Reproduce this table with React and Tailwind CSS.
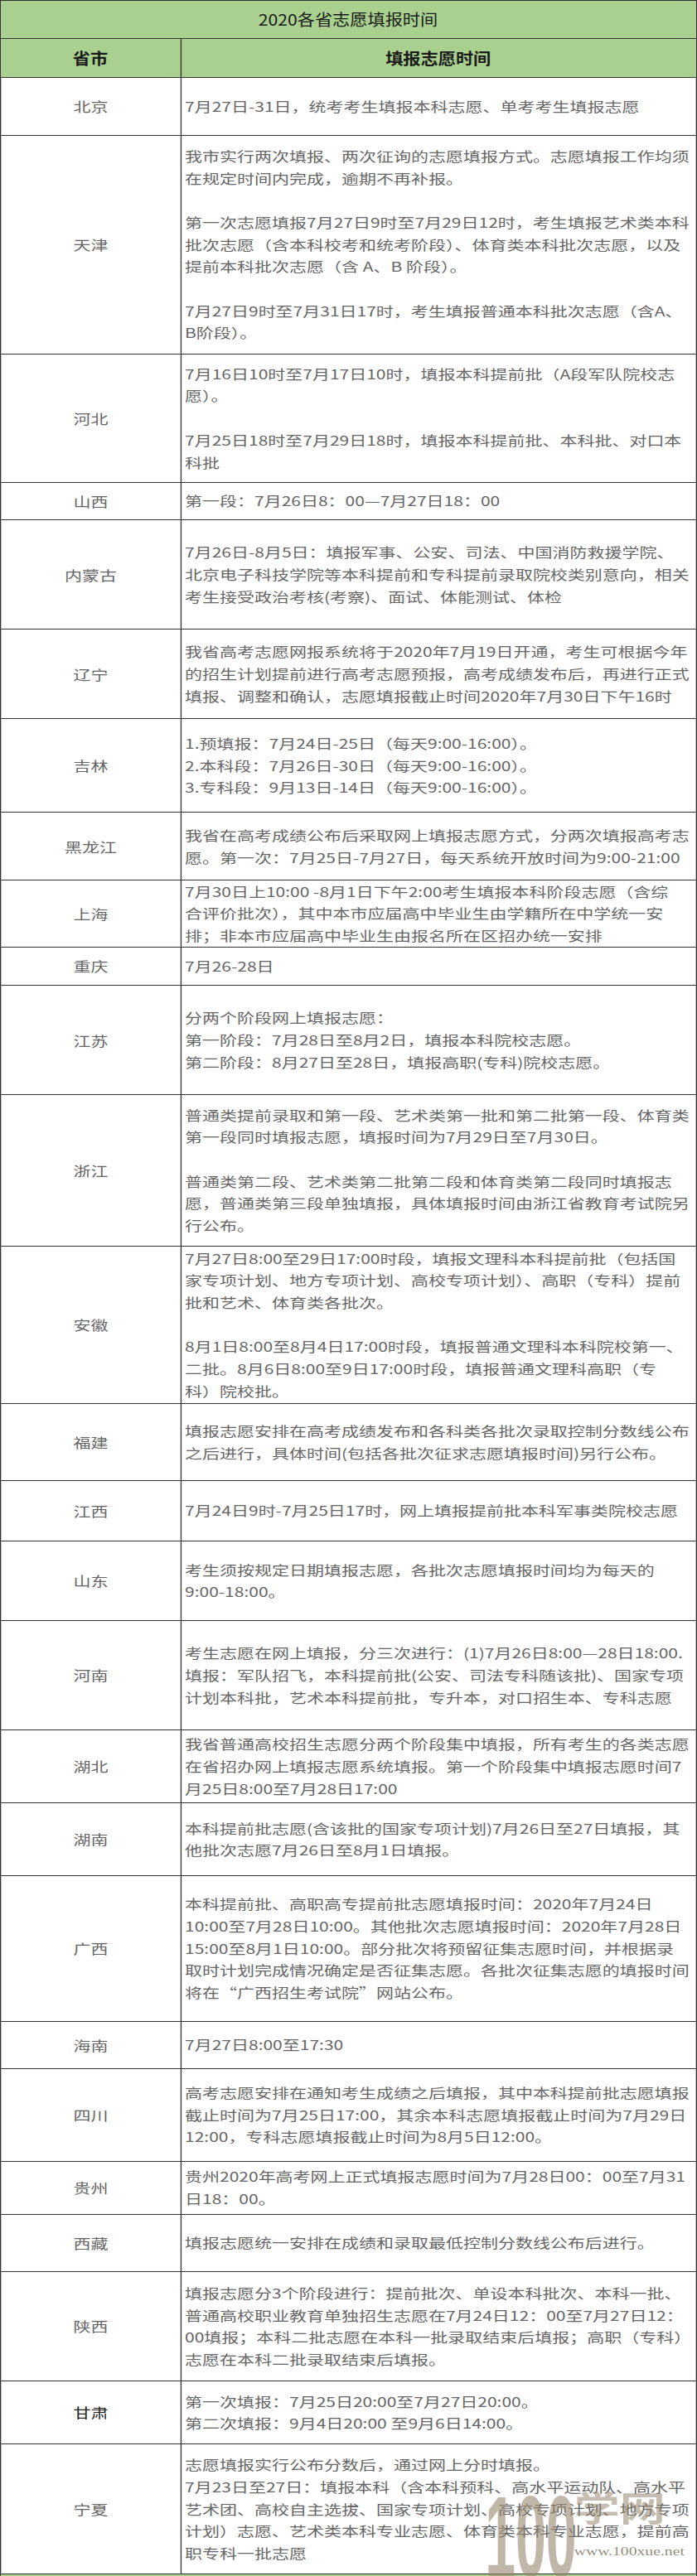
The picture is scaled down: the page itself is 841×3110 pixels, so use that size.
import React from 'react';

const rows = [
  { name: '北京', h: 'h-[70px]', p: [['7月27日-31日，统考考生填报本科志愿、单考考生填报志愿']] },
  {
    name: '天津',
    h: 'h-[264px]',
    p: [
      ['我市实行两次填报、两次征询的志愿填报方式。志愿填报工作均须', '在规定时间内完成，逾期不再补报。'],
      ['第一次志愿填报7月27日9时至7月29日12时，考生填报艺术类本科', '批次志愿（含本科校考和统考阶段）、体育类本科批次志愿，以及', '提前本科批次志愿（含 A、B 阶段）。'],
      ['7月27日9时至7月31日17时，考生填报普通本科批次志愿（含A、', 'B阶段）。'],
    ],
  },
  {
    name: '河北',
    h: 'h-[155px]',
    p: [
      ['7月16日10时至7月17日10时，填报本科提前批（A段军队院校志', '愿）。'],
      ['7月25日18时至7月29日18时，填报本科提前批、本科批、对口本', '科批'],
    ],
  },
  { name: '山西', h: 'h-[45.5px]', p: [['第一段：7月26日8：00—7月27日18：00']] },
  {
    name: '内蒙古',
    h: 'h-[132px]',
    p: [['7月26日-8月5日：填报军事、公安、司法、中国消防救援学院、', '北京电子科技学院等本科提前和专科提前录取院校类别意向，相关', '考生接受政治考核(考察)、面试、体能测试、体检']],
  },
  {
    name: '辽宁',
    h: 'h-[108px]',
    p: [['我省高考志愿网报系统将于2020年7月19日开通，考生可根据今年', '的招生计划提前进行高考志愿预报，高考成绩发布后，再进行正式', '填报、调整和确认，志愿填报截止时间2020年7月30日下午16时']],
  },
  {
    name: '吉林',
    h: 'h-[113px]',
    p: [['1.预填报：7月24日-25日（每天9:00-16:00）。', '2.本科段：7月26日-30日（每天9:00-16:00）。', '3.专科段：9月13日-14日（每天9:00-16:00）。']],
  },
  {
    name: '黑龙江',
    h: 'h-[82px]',
    p: [['我省在高考成绩公布后采取网上填报志愿方式，分两次填报高考志', '愿。第一次：7月25日-7月27日，每天系统开放时间为9:00-21:00']],
  },
  {
    name: '上海',
    h: 'h-[80.5px]',
    p: [['7月30日上10:00 -8月1日下午2:00考生填报本科阶段志愿（含综', '合评价批次），其中本市应届高中毕业生由学籍所在中学统一安', '排；非本市应届高中毕业生由报名所在区招办统一安排']],
  },
  { name: '重庆', h: 'h-[46.5px]', p: [['7月26-28日']] },
  {
    name: '江苏',
    h: 'h-[132px]',
    p: [['分两个阶段网上填报志愿：', '第一阶段：7月28日至8月2日，填报本科院校志愿。', '第二阶段：8月27日至28日，填报高职(专科)院校志愿。']],
  },
  {
    name: '浙江',
    h: 'h-[182.5px]',
    p: [
      ['普通类提前录取和第一段、艺术类第一批和第二批第一段、体育类', '第一段同时填报志愿，填报时间为7月29日至7月30日。'],
      ['普通类第二段、艺术类第二批第二段和体育类第二段同时填报志', '愿，普通类第三段单独填报，具体填报时间由浙江省教育考试院另', '行公布。'],
    ],
  },
  {
    name: '安徽',
    h: 'h-[190px]',
    p: [
      ['7月27日8:00至29日17:00时段，填报文理科本科提前批（包括国', '家专项计划、地方专项计划、高校专项计划）、高职（专科）提前', '批和艺术、体育类各批次。'],
      ['8月1日8:00至8月4日17:00时段，填报普通文理科本科院校第一、', '二批。8月6日8:00至9日17:00时段，填报普通文理科高职（专', '科）院校批。'],
    ],
  },
  {
    name: '福建',
    h: 'h-[93.5px]',
    p: [['填报志愿安排在高考成绩发布和各科类各批次录取控制分数线公布', '之后进行，具体时间(包括各批次征求志愿填报时间)另行公布。']],
  },
  { name: '江西', h: 'h-[72.5px]', p: [['7月24日9时-7月25日17时，网上填报提前批本科军事类院校志愿']] },
  {
    name: '山东',
    h: 'h-[96.5px]',
    p: [['考生须按规定日期填报志愿，各批次志愿填报时间均为每天的', '9:00-18:00。']],
  },
  {
    name: '河南',
    h: 'h-[131.5px]',
    p: [['考生志愿在网上填报，分三次进行：(1)7月26日8:00—28日18:00.', '填报：军队招飞，本科提前批(公安、司法专科随该批)、国家专项', '计划本科批，艺术本科提前批，专升本，对口招生本、专科志愿']],
  },
  {
    name: '湖北',
    h: 'h-[88.5px]',
    p: [['我省普通高校招生志愿分两个阶段集中填报，所有考生的各类志愿', '在省招办网上填报志愿系统填报。第一个阶段集中填报志愿时间7', '月25日8:00至7月28日17:00']],
  },
  {
    name: '湖南',
    h: 'h-[87.5px]',
    p: [['本科提前批志愿(含该批的国家专项计划)7月26日至27日填报，其', '他批次志愿7月26日至8月1日填报。']],
  },
  {
    name: '广西',
    h: 'h-[176px]',
    p: [[
      '本科提前批、高职高专提前批志愿填报时间：2020年7月24日',
      '10:00至7月28日10:00。其他批次志愿填报时间：2020年7月28日',
      '15:00至8月1日10:00。部分批次将预留征集志愿时间，并根据录',
      '取时计划完成情况确定是否征集志愿。各批次征集志愿的填报时间',
      '将在“广西招生考试院”网站公布。',
    ]],
  },
  { name: '海南', h: 'h-[57px]', p: [['7月27日8:00至17:30']] },
  {
    name: '四川',
    h: 'h-[112px]',
    p: [['高考志愿安排在通知考生成绩之后填报，其中本科提前批志愿填报', '截止时间为7月25日17:00，其余本科志愿填报截止时间为7月29日', '12:00，专科志愿填报截止时间为8月5日12:00。']],
  },
  {
    name: '贵州',
    h: 'h-[64px]',
    p: [['贵州2020年高考网上正式填报志愿时间为7月28日00：00至7月31', '日18：00。']],
  },
  { name: '西藏', h: 'h-[69.5px]', p: [['填报志愿统一安排在成绩和录取最低控制分数线公布后进行。']] },
  {
    name: '陕西',
    h: 'h-[131.5px]',
    p: [['填报志愿分3个阶段进行：提前批次、单设本科批次、本科一批、', '普通高校职业教育单独招生志愿在7月24日12：00至7月27日12：', '00填报；本科二批志愿在本科一批录取结束后填报；高职（专科）', '志愿在本科二批录取结束后填报。']],
  },
  {
    name: '甘肃',
    h: 'h-[76.5px]',
    dark: true,
    p: [['第一次填报：7月25日20:00至7月27日20:00。', '第二次填报：9月4日20:00 至9月6日14:00。']],
  },
  {
    name: '宁夏',
    h: 'h-[157px]',
    p: [[
      '志愿填报实行公布分数后，通过网上分时填报。',
      '7月23日至27日：填报本科（含本科预科、高水平运动队、高水平',
      '艺术团、高校自主选拔、国家专项计划、高校专项计划、地方专项',
      '计划）志愿、艺术类本科专业志愿、体育类本科专业志愿，提前高',
      '职专科一批志愿',
    ]],
  },
];

function Row({ r }) {
  return (
    <div className={`flex border-b border-[#333] ${r.h}`}>
      <div className={`w-[166px] shrink-0 border-r border-[#333] flex items-center justify-center ${r.dark ? 'text-[#222]' : 'text-[#666]'}`}>
        {r.name}
      </div>
      <div className="flex-1 flex flex-col justify-center pl-[3px] leading-[26.7px] text-[#666] whitespace-nowrap">
        {r.p.map((para, i) => (
          <React.Fragment key={i}>
            {i > 0 && <div className="h-[26.7px]" />}
            {para.map((line, j) => (
              <div key={j}>{line}</div>
            ))}
          </React.Fragment>
        ))}
      </div>
    </div>
  );
}

export default function App() {
  return (
    <div className="w-[841px] overflow-hidden bg-white">
      {/* the source picture is stretched sideways, so the whole table is too */}
      <div className="relative w-[641px] origin-left scale-x-[1.312] border-l border-r border-t border-[#333] text-[16px] font-['Noto_Sans_CJK_SC',sans-serif]">
        <div className="h-[46px] flex items-center justify-center bg-[#a9d08e] border-b border-[#333]">
          <span className="inline-block scale-x-[0.85] text-[19px] text-[#1a1a1a]">2020各省志愿填报时间</span>
        </div>
        <div className="h-[46.5px] flex bg-[#a9d08e] border-b border-[#333]">
          <div className="w-[166px] shrink-0 border-r border-[#333] flex items-center justify-center">
            <span className="inline-block scale-x-[0.85] text-[19px] font-bold text-[#1a1a1a]">省市</span>
          </div>
          <div className="flex-1 flex items-center justify-center">
            <span className="inline-block scale-x-[0.85] text-[19px] font-bold text-[#1a1a1a]">填报志愿时间</span>
          </div>
        </div>

        {rows.map((r) => (
          <Row key={r.name} r={r} />
        ))}

        <div className="h-[3px] bg-[#a9d08e]" />

        {/* 100学网 watermark */}
        <div className="pointer-events-none absolute left-[445px] top-[2992px] origin-left scale-x-[0.36] text-[140px] leading-none font-bold font-['Liberation_Sans',sans-serif] text-[rgba(150,135,112,0.6)]">
          100
        </div>
        <div className="pointer-events-none absolute left-[527px] top-[3004px] text-[42px] leading-none font-bold text-[rgba(150,135,112,0.55)]">
          学网
        </div>
        <div className="pointer-events-none absolute left-[527px] top-[3072px] text-[15px] leading-none font-['Liberation_Serif',serif] text-[rgba(130,118,100,0.85)]">
          www.100xue.net
        </div>
      </div>
    </div>
  );
}
